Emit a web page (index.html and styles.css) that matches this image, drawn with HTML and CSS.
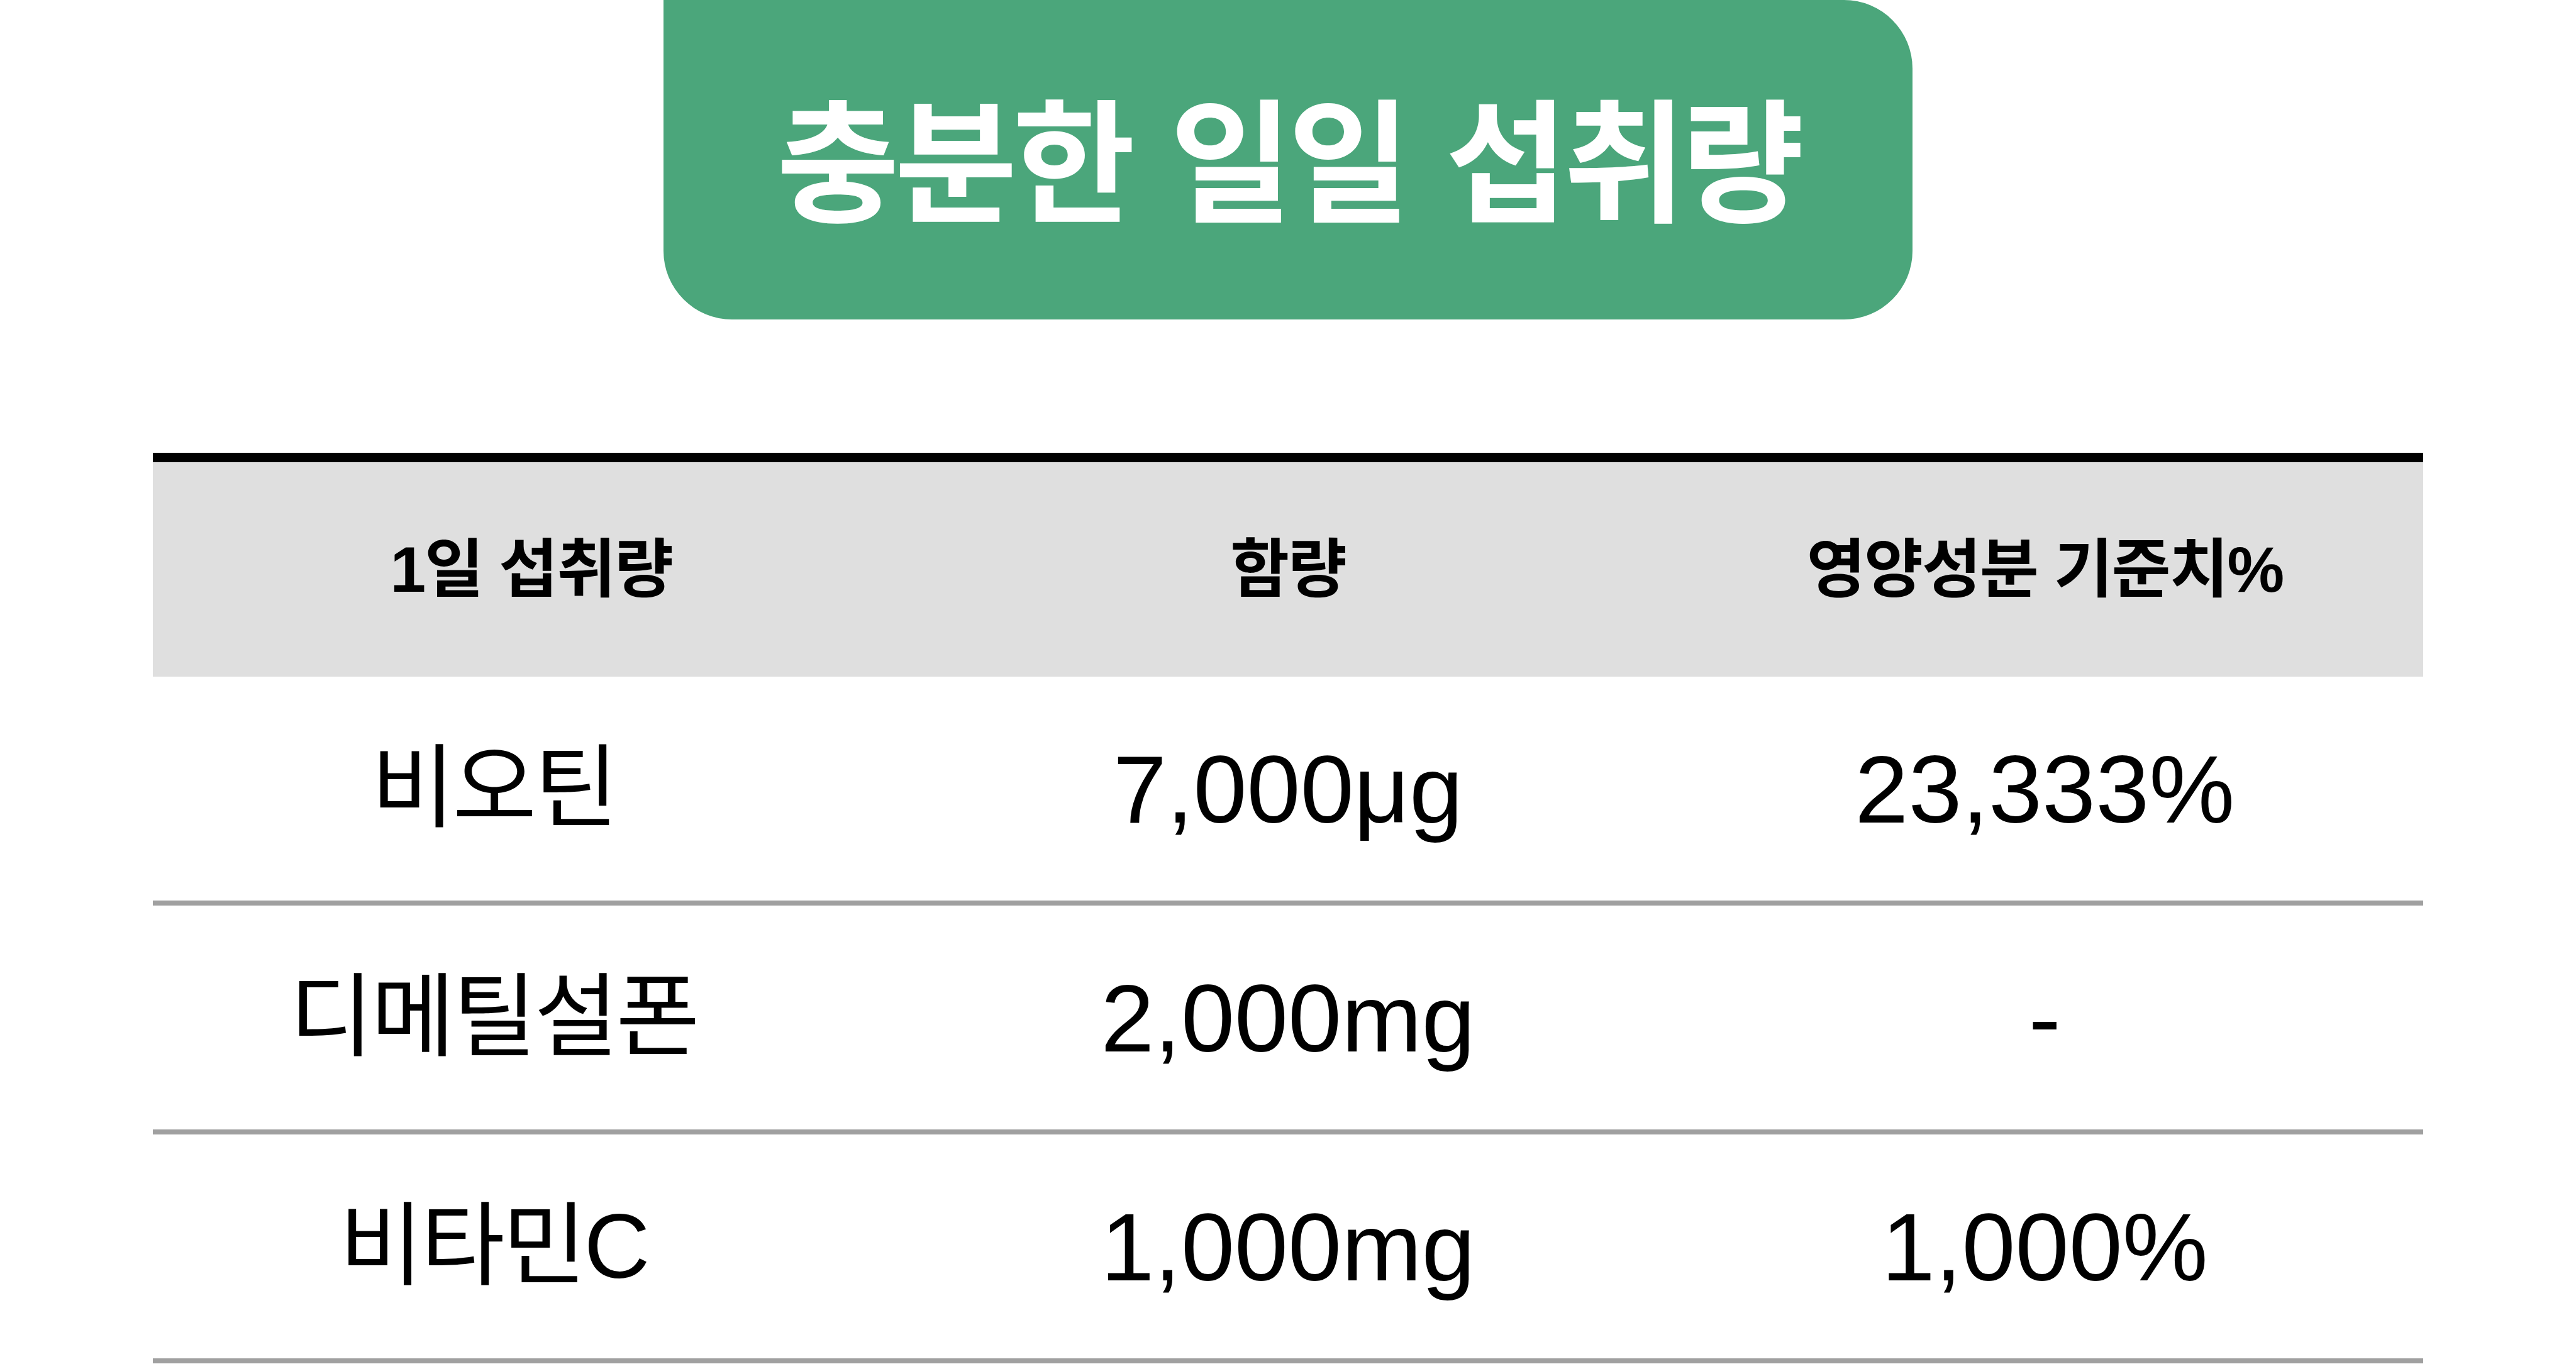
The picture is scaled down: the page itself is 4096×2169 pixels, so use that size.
FILE: index.html
```html
<!DOCTYPE html>
<html lang="ko">
<head>
<meta charset="utf-8">
<title>충분한 일일 섭취량</title>
<link rel="stylesheet" href="styles.css">
</head>
<body>
  <div class="page">
    <div class="title-box">
      <h1 class="title">충분한 일일 섭취량</h1>
    </div>
    <div class="table">
      <div class="row head">
        <div class="cell">1일 섭취량</div>
        <div class="cell">함량</div>
        <div class="cell">영양성분 기준치%</div>
      </div>
      <div class="row body">
        <div class="cell name">비오틴</div>
        <div class="cell num">7,000μg</div>
        <div class="cell num">23,333%</div>
      </div>
      <div class="row body">
        <div class="cell name">디메틸설폰</div>
        <div class="cell num">2,000mg</div>
        <div class="cell num">-</div>
      </div>
      <div class="row body">
        <div class="cell name">비타민C</div>
        <div class="cell num">1,000mg</div>
        <div class="cell num">1,000%</div>
      </div>
    </div>
  </div>
</body>
</html>
```

FILE: styles.css
```css
html, body {
  margin: 0;
  padding: 0;
  background: #ffffff;
}

body {
  font-family: "Liberation Sans", "Noto Sans CJK KR", sans-serif;
  color: #000000;
}

.page {
  width: 4096px;
  display: flex;
  flex-direction: column;
  align-items: center;
}

.title-box {
  width: 1986px;
  height: 508px;
  background: #4ba67b;
  border-radius: 0 109px 109px 109px;
  display: flex;
  align-items: center;
  justify-content: center;
}

.title {
  margin: 0;
  font-family: "Noto Sans CJK KR", sans-serif;
  font-weight: 700;
  font-size: 212px;
  letter-spacing: -0.035em;
  word-spacing: 0.05em;
  line-height: 1;
  color: #ffffff;
  padding-bottom: 18px;
}

.table {
  margin-top: 212px;
  width: 3610px;
  border-top: 15px solid #000000;
}

.row {
  display: grid;
  grid-template-columns: 1fr 1fr 1fr;
}

.cell {
  display: flex;
  align-items: center;
  justify-content: center;
  white-space: nowrap;
  line-height: 1;
}

.head {
  height: 341px;
  background: #dfdfdf;
}

.head .cell {
  font-family: "Liberation Sans", "Noto Sans CJK KR", sans-serif;
  font-weight: 700;
  font-size: 102px;
  letter-spacing: -0.02em;
}

.body {
  height: 356px;
  border-bottom: 8px solid #a0a0a0;
}

.body .cell {
  font-size: 153px;
  font-weight: 400;
}

.body .name {
  font-size: 145px;
  letter-spacing: -0.025em;
  padding-right: 120px;
}

.body .num {
  letter-spacing: 0;
}
```
